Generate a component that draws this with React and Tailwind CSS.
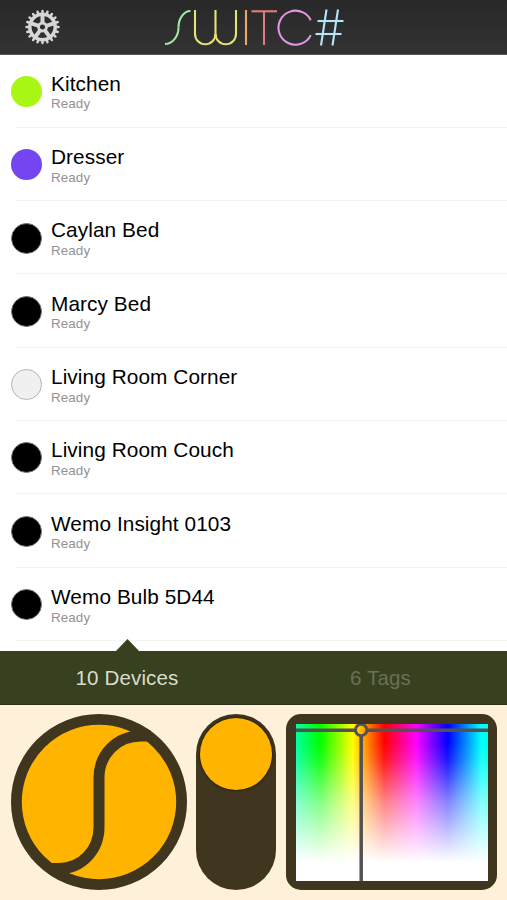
const devices = [
  { name: "Kitchen", dot: "bg-[#a9f514]" },
  { name: "Dresser", dot: "bg-[#7446f2]" },
  { name: "Caylan Bed", dot: "bg-black border border-[#777]" },
  { name: "Marcy Bed", dot: "bg-black border border-[#777]" },
  { name: "Living Room Corner", dot: "bg-[#f0f0f0] border border-[#b5b5b5]" },
  { name: "Living Room Couch", dot: "bg-black border border-[#777]" },
  { name: "Wemo Insight 0103", dot: "bg-black border border-[#777]" },
  { name: "Wemo Bulb 5D44", dot: "bg-black border border-[#777]" },
];

const teeth = Array.from({ length: 20 }, (_, i) => i * 18);
const spokes = [0, 72, 144, 216, 288];

function Gear() {
  return (
    <svg className="h-9 w-9" viewBox="-18.5 -18 36 36" aria-label="Settings">
      <g fill="none" stroke="#d6d6d6">
        <circle r="12.7" strokeWidth="3.5" />
        <circle r="4" strokeWidth="2.8" />
        {spokes.map((a) => (
          <line key={a} y1="-4.5" y2="-12" strokeWidth="4" transform={`rotate(${a})`} />
        ))}
        {teeth.map((a) => (
          <line key={a} y1="-14" y2="-16" strokeWidth="2.500" strokeLinecap="round" transform={`rotate(${a})`} />
        ))}
      </g>
    </svg>
  );
}

function Logo() {
  return (
    <svg className="h-[54px] w-[190px]" viewBox="160 0 190 54" role="img" aria-label="Switc#">
      <g fill="none" strokeWidth="2.1">
        <g stroke="#a0e6a8">
          <ellipse cx="165" cy="27.5" rx="13.5" ry="16.5" pathLength="100" strokeDasharray="25 75" />
          <ellipse cx="190.5" cy="27.5" rx="12" ry="16.5" pathLength="100" strokeDasharray="25 75" transform="rotate(180 190.5 27.5)" />
        </g>
        <g stroke="#e6e276">
          <line x1="195" y1="10" x2="195" y2="34.2" />
          <line x1="215.5" y1="10" x2="215.5" y2="36" />
          <line x1="236" y1="10" x2="236" y2="34.2" />
          <circle cx="205.25" cy="34" r="10.25" pathLength="100" strokeDasharray="50 50" />
          <circle cx="225.75" cy="34" r="10.25" pathLength="100" strokeDasharray="50 50" />
        </g>
        <line x1="246" y1="10" x2="246" y2="45" stroke="#e8a868" />
        <g stroke="#e07c7c">
          <line x1="251.5" y1="11.3" x2="277" y2="11.3" />
          <line x1="264" y1="11" x2="264" y2="45" />
        </g>
        <circle cx="295.5" cy="27.7" r="17" stroke="#e294e6" pathLength="360" strokeDasharray="308 52" transform="rotate(26 295.5 27.7)" />
        <g stroke="#b4e6f8">
          <line x1="326.5" y1="9.5" x2="321" y2="45.5" />
          <line x1="338" y1="9.5" x2="332.5" y2="45.5" />
          <line x1="317.5" y1="21" x2="343.5" y2="21" />
          <line x1="315.5" y1="34" x2="341.5" y2="34" />
        </g>
      </g>
    </svg>
  );
}

function DeviceRow({ name, dot }) {
  return (
    <li className="flex h-[73.3px] shrink-0 pl-[10.5px]">
      <span className={`mt-[21.5px] h-[31px] w-[31px] shrink-0 rounded-full ${dot}`} />
      <div className="ml-[9.5px] flex-1 pt-[17.300px]">
        <div className="text-[20.8px] leading-6 tracking-[0.08px] text-black">{name}</div>
        <div className="mt-[0.7px] text-[13.4px] leading-4 tracking-[0.1px] text-[#929292]">Ready</div>
        <div className="-ml-[36px] mt-[14.300px] h-px bg-[#f3f3f3]" />
      </div>
    </li>
  );
}

function Orb() {
  return (
    <svg className="h-[176px] w-[176px]" viewBox="0 0 176 176">
      <circle cx="88" cy="88" r="82.6" fill="#ffb400" stroke="#40361f" strokeWidth="10.8" />
      <path d="M140 22H130C106 22 88 40 88 64V113C88 136 71 154.500 48 154.500H37" fill="none" stroke="#40361f" strokeWidth="11" />
    </svg>
  );
}

function ColorField() {
  return (
    <div className="h-[176px] w-[211px] rounded-[15px] bg-[#40361f] pt-[9.500px] pr-[9px] pb-[9.500px] pl-[10px]">
      <div className="relative h-full overflow-hidden bg-[linear-gradient(90deg,#00ffa0_0%,#00ff00_12.5%,#ffff00_29.5%,#ff0000_46%,#ff00ff_62.5%,#0000ff_79%,#00ffff_96.5%,#00ffe0_100%)]">
        <div className="h-full bg-[linear-gradient(180deg,rgba(255,255,255,0)_12%,rgba(255,255,255,0.1)_23%,rgba(255,255,255,0.52)_50%,#fff_88%)]" />
        <svg className="absolute inset-0 h-full w-full" viewBox="0 0 192 157" preserveAspectRatio="none">
          <g fill="none" stroke="#555055">
            <path d="M0 6.200H59M71 6.200H192M65.200 12V157" strokeWidth="3.500" />
            <circle cx="65.200" cy="6" r="5.700" strokeWidth="3" />
          </g>
        </svg>
      </div>
    </div>
  );
}

export default function App() {
  return (
    <div className="flex h-[900px] w-[507px] flex-col overflow-hidden bg-white font-['Liberation_Sans',Arial,sans-serif]">
      <header className="flex h-[54.500px] shrink-0 border-b border-[#555] bg-linear-to-b from-[#282828] to-[#333]">
        <div className="ml-[24px] pt-[9px]"><Gear /></div>
        <div className="ml-[100px]"><Logo /></div>
      </header>
      <ul className="flex h-[596.500px] shrink-0 flex-col overflow-hidden">
        {devices.map((d) => <DeviceRow key={d.name} {...d} />)}
      </ul>
      <nav className="relative flex h-[54px] shrink-0 items-center border-b border-[#2a3317] bg-[#37401f] pt-[2px] text-[20.600px] tracking-[0.1px]">
        <div className="absolute -top-[12px] left-[115px] h-[13px] w-[25px] bg-[#37401f] [clip-path:polygon(50%_0,100%_100%,0_100%)]" />
        <div className="w-[254px] text-center text-[#d9dccb]">10 Devices</div>
        <div className="flex-1 text-center text-[#697056]">6 Tags</div>
      </nav>
      <main className="flex flex-1 bg-[#fff1d9] pt-[9px] pl-[11px]">
        <Orb />
        <div className="ml-[9px] h-[176px] w-[80px] rounded-full bg-[#40361f] pt-[4px] pl-[4px]">
          <div className="h-[72px] w-[72px] rounded-full bg-[#ffb400] shadow-[0_0_2px_1px_#2a2210]" />
        </div>
        <div className="ml-[10px]"><ColorField /></div>
      </main>
    </div>
  );
}
